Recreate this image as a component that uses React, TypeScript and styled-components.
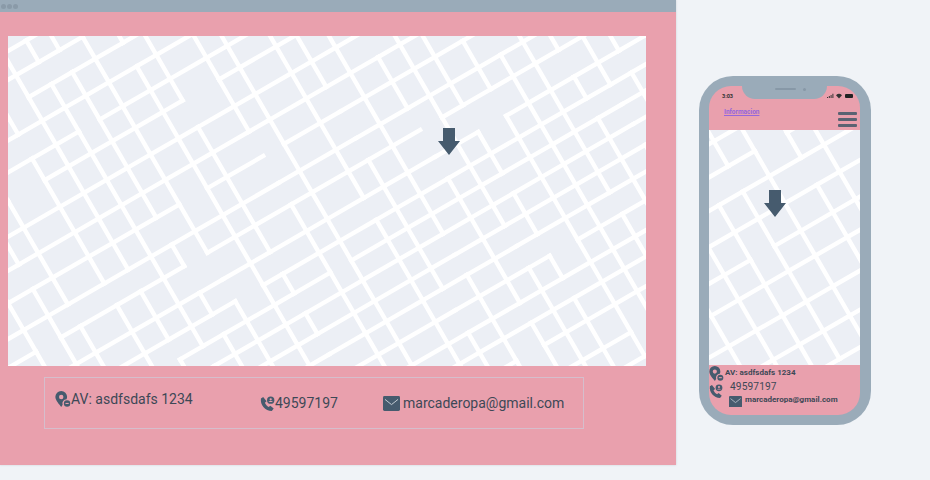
import React from 'react';
import styled, {createGlobalStyle} from 'styled-components';

const PINK = '#e9a0ad';
const SLATE = '#9aabb9';
const INK = '#465b6e';
const TEXT = '#3d4856';

const GlobalStyle = createGlobalStyle`
  html, body {
    margin: 0;
    padding: 0;
    background: #f0f3f7;
    font-family: Roboto, "Liberation Sans", sans-serif;
    overflow: hidden;
  }
`;

// fixed pseudo random numbers, so the street map comes out the same every time
const hash = (a: number, b: number) => {
    const v = Math.sin(a * 127.1 + b * 311.7) * 43758.5453;
    return v - Math.floor(v);
};

const buildAxis = (seed: number, from: number, to: number) => {
    const out: number[] = [];
    let p = from;
    let i = 0;
    while (p < to) {
        out.push(p);
        const r = hash(seed, i++);
        p += r > 0.9 ? 42 : 22 + r * 12;
    }
    return out;
};

const xs = buildAxis(3, -500, 1000);
const ys = buildAxis(7, -500, 900);

const segments: { x1: number; y1: number; x2: number; y2: number }[] = [];
ys.forEach((y, i) => {
    xs.forEach((x, j) => {
        if (j < xs.length - 1 && hash(i + 11, j + 5) < 0.96) {
            segments.push({x1: x, y1: y, x2: xs[j + 1], y2: y});
        }
        if (i < ys.length - 1 && hash(i + 23, j + 41) < 0.82) {
            segments.push({x1: x, y1: y, x2: x, y2: ys[i + 1]});
        }
    });
});

const StreetMap = ({dx, dy, zoom}: { dx: number; dy: number; zoom: number }) => (
    <MapSvg>
        <rect width="100%" height="100%" fill="#eceff5"/>
        <g
            transform={`translate(${dx} ${dy}) rotate(-30) scale(${zoom})`}
            stroke="#fff"
            strokeWidth={4.4 / zoom}
            strokeLinecap="square"
        >
            {segments.map((s, i) => (
                <line key={i} x1={s.x1} y1={s.y1} x2={s.x2} y2={s.y2}/>
            ))}
        </g>
    </MapSvg>
);

const ArrowDown = () => (
    <svg width="22" height="27" viewBox="0 0 22 27">
        <path d="M5 0h12v13h5L11 27 0 13h5z" fill={INK}/>
    </svg>
);

const PinIcon = ({size}: { size: number }) => (
    <svg width={size} height={size} viewBox="0 0 18 18">
        <path
            fillRule="evenodd"
            d="M7 0a6.6 6.6 0 0 1 6.6 6.6c0 1-.2 1.9-.6 2.8a4.6 4.6 0 0 0-4.4 6.2L7 18c-2-2.6-6.6-7.2-6.6-11.4A6.6 6.6 0 0 1 7 0zm0 4.2a2.5 2.5 0 1 0 0 5 2.5 2.5 0 0 0 0-5z"
            fill={INK}
        />
        <circle cx="13.6" cy="14" r="3.6" fill={INK}/>
        <rect x="11.8" y="13.4" width="3.6" height="1.2" fill={PINK}/>
    </svg>
);

const PhoneIcon = ({size}: { size: number }) => (
    <svg width={size} height={size} viewBox="0 0 16 16">
        <path
            d="M3.4 1 1 2.6C.6 6 1.4 9 3.6 11.6 6 14.4 9 15.8 12.6 16l2-2.6-3.6-3-1.8 1.4C7.6 11 6 9.2 5.2 7.2L7 5.6z"
            fill={INK}
        />
        <circle cx="11.4" cy="4.4" r="3.9" fill={INK}/>
        <circle cx="11.4" cy="3.5" r="1.2" fill={PINK}/>
        <path d="M9.2 6.4c.5-1.3 3.9-1.3 4.4 0z" fill={PINK}/>
    </svg>
);

const MailIcon = ({width}: { width: number }) => (
    <svg width={width} height={width * 15 / 17} viewBox="0 0 17 15">
        <rect width="17" height="15" rx="1.4" fill={INK}/>
        <path d="M2 3.4 8.5 8.6 15 3.4" fill="none" stroke="#c3cbd3" strokeWidth="1"/>
    </svg>
);

const StatusIcons = () => (
    <svg width="26" height="6" viewBox="0 0 26 6">
        <path d="M0 5h1V4H0zM1.8 5h1V3h-1zM3.6 5h1V2h-1zM5.4 5h1V.8h-1z" fill="#333"/>
        <path d="M9 2.2a4.4 4.4 0 0 1 6 0L12 5.6z" fill="#333"/>
        <rect x="18" y="1" width="8" height="4" rx="1" fill="#222"/>
    </svg>
);

export default function App() {
    return (
        <Page>
            <GlobalStyle/>
            <Browser>
                <TitleBar>
                    <Dot/>
                    <Dot/>
                    <Dot/>
                </TitleBar>
                <BrowserBody>
                    <DesktopMap>
                        <StreetMap dx={0} dy={0} zoom={1}/>
                        <DesktopArrow><ArrowDown/></DesktopArrow>
                    </DesktopMap>
                    <ContactBox>
                        <AddressItem>
                            <PinIcon size={16}/>
                            <ContactText>AV: asdfsdafs 1234</ContactText>
                        </AddressItem>
                        <PhoneItem>
                            <PhoneIcon size={15}/>
                            <ContactText>49597197</ContactText>
                        </PhoneItem>
                        <MailItem>
                            <MailIcon width={17}/>
                            <ContactText>marcaderopa@gmail.com</ContactText>
                        </MailItem>
                    </ContactBox>
                </BrowserBody>
            </Browser>
            <Phone>
                <Screen>
                    <Notch>
                        <Speaker/>
                        <Camera/>
                    </Notch>
                    <PhoneHeader>
                        <StatusRow>
                            <Clock>3:03</Clock>
                            <StatusIcons/>
                        </StatusRow>
                        <NavRow>
                            <InfoLink href="#">Informacion</InfoLink>
                            <BurgerBox>
                                <BurgerBar/>
                                <BurgerBar/>
                                <BurgerBar/>
                            </BurgerBox>
                        </NavRow>
                    </PhoneHeader>
                    <PhoneMap>
                        <StreetMap dx={-40} dy={20} zoom={1.15}/>
                        <PhoneArrow><ArrowDown/></PhoneArrow>
                    </PhoneMap>
                    <PhoneFooter>
                        <PhoneAddress>
                            <PinIcon size={15}/>
                            <SmallText>AV: asdfsdafs 1234</SmallText>
                        </PhoneAddress>
                        <PhoneNumber>
                            <PhoneCallIcon><PhoneIcon size={14}/></PhoneCallIcon>
                            <NumberText>49597197</NumberText>
                        </PhoneNumber>
                        <PhoneMail>
                            <MailIcon width={13}/>
                            <SmallText>marcaderopa@gmail.com</SmallText>
                        </PhoneMail>
                    </PhoneFooter>
                </Screen>
            </Phone>
        </Page>
    );
}

const Page = styled.div`
  display: flex;
  align-items: flex-start;
  width: 930px;
  height: 480px;
  background: #f0f3f7;
`;

const Browser = styled.div`
  width: 676px;
  height: 465px;
  flex-shrink: 0;
  background: ${PINK};
  box-shadow: 0 0 2px rgba(90, 100, 120, 0.25);
`;

const TitleBar = styled.div`
  height: 12px;
  background: ${SLATE};
  display: flex;
  align-items: center;
  gap: 1px;
  padding-left: 1px;
`;

const Dot = styled.span`
  width: 5px;
  height: 5px;
  border-radius: 50%;
  background: #8a9aa8;
`;

const BrowserBody = styled.div`
  padding: 24px 30px 0 8px;
`;

const MapSvg = styled.svg`
  display: block;
  width: 100%;
  height: 100%;
`;

const DesktopMap = styled.div`
  position: relative;
  width: 638px;
  height: 330px;
`;

const DesktopArrow = styled.div`
  position: absolute;
  left: 430px;
  top: 92px;
  line-height: 0;
`;

const ContactBox = styled.div`
  display: flex;
  width: 538px;
  height: 50px;
  margin: 11px 0 0 36px;
  border: 1px solid rgba(205, 200, 215, 0.75);
`;

const ContactItem = styled.div`
  display: flex;
  align-items: center;
  flex-shrink: 0;
  height: 18px;
  color: ${TEXT};
`;

const AddressItem = styled(ContactItem)`
  width: 205px;
  margin: 12px 0 0 10px;
`;

const PhoneItem = styled(ContactItem)`
  width: 123px;
  margin: 16px 0 0 0;
`;

const MailItem = styled(ContactItem)`
  gap: 3px;
  margin: 16px 0 0 0;
`;

const ContactText = styled.span`
  font-size: 14px;
  line-height: 18px;
  white-space: nowrap;
`;

const Phone = styled.div`
  width: 172px;
  height: 349px;
  flex-shrink: 0;
  box-sizing: border-box;
  margin: 76px 0 0 23px;
  padding: 10px 11px 10px 10px;
  background: ${SLATE};
  border-radius: 34px;
`;

const Screen = styled.div`
  position: relative;
  height: 100%;
  display: flex;
  flex-direction: column;
  background: ${PINK};
  border-radius: 22px;
  overflow: hidden;
`;

const Notch = styled.div`
  position: absolute;
  top: 0;
  left: 33px;
  width: 85px;
  height: 13px;
  display: flex;
  align-items: flex-start;
  justify-content: center;
  gap: 7px;
  padding-top: 2px;
  box-sizing: border-box;
  background: ${SLATE};
  border-radius: 0 0 13px 13px;
`;

const Speaker = styled.span`
  width: 21px;
  height: 2px;
  margin-left: 12px;
  border-radius: 1px;
  background: #8798a7;
`;

const Camera = styled.span`
  width: 3px;
  height: 3px;
  border-radius: 50%;
  background: #8798a7;
`;

const PhoneHeader = styled.div`
  height: 44px;
  flex-shrink: 0;
`;

const StatusRow = styled.div`
  display: flex;
  justify-content: space-between;
  align-items: center;
  height: 8px;
  padding: 6px 7px 0 13px;
`;

const Clock = styled.span`
  font-size: 5.5px;
  font-weight: 700;
  color: #333;
`;

const NavRow = styled.div`
  display: flex;
  justify-content: space-between;
  align-items: flex-start;
  padding: 8px 3px 0 15px;
`;

const InfoLink = styled.a`
  font-size: 6.5px;
  font-weight: 700;
  line-height: 9px;
  color: #9466dc;
`;

const BurgerBox = styled.div`
  display: flex;
  flex-direction: column;
  gap: 3px;
  margin-top: 4px;
`;

const BurgerBar = styled.span`
  display: block;
  width: 19px;
  height: 3px;
  border-radius: 1px;
  background: #5a6272;
`;

const PhoneMap = styled.div`
  position: relative;
  height: 235px;
  flex-shrink: 0;
`;

const PhoneArrow = styled.div`
  position: absolute;
  left: 55px;
  top: 60px;
  line-height: 0;
`;

const PhoneFooter = styled.div`
  display: flex;
  flex-direction: column;
  color: ${TEXT};
`;

const PhoneAddress = styled.div`
  display: flex;
  align-items: center;
  gap: 1px;
  height: 16px;
`;

const PhoneNumber = styled.div`
  display: flex;
  align-items: flex-start;
  gap: 7px;
  height: 13px;
`;

const PhoneCallIcon = styled.span`
  line-height: 0;
  margin-top: 3px;
`;

const PhoneMail = styled.div`
  display: flex;
  align-items: flex-start;
  gap: 3px;
  height: 11px;
  margin: 2px 0 0 20px;
`;

const SmallText = styled.span`
  font-size: 8px;
  line-height: 8px;
  font-weight: 700;
  white-space: nowrap;
`;

const NumberText = styled.span`
  font-size: 10.2px;
  line-height: 12px;
  letter-spacing: 0.1px;
`;
